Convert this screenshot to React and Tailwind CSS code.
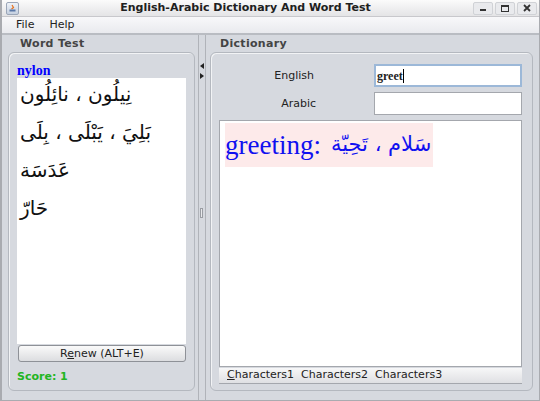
import React from "react";

const ui = { fontFamily: '"DejaVu Sans", sans-serif' };
const serif = { fontFamily: '"Liberation Serif", "DejaVu Serif", serif' };
const arabic = { fontFamily: '"DejaVu Sans", "Noto Sans", sans-serif' };

function TitleBar() {
  return (
    <div className="h-[17px] flex items-center bg-gradient-to-b from-[#fbfbfb] to-[#e4e4e6] border-b border-[#c8c8cc] relative">
      {/* java cup icon */}
      <div className="ml-[4px] w-[13px] h-[13px] rounded-[2px] border border-[#9ba6b8] bg-gradient-to-b from-[#eef2f8] to-[#c5d0e0] flex items-center justify-center">
        <svg width="9" height="9" viewBox="0 0 9 9">
          <path d="M4 1 L5.5 3.5 L3.5 5" stroke="#e8701a" strokeWidth="1.2" fill="none" />
          <rect x="1.5" y="5.5" width="6" height="2" fill="#5a78a8" />
        </svg>
      </div>
      <div className="absolute left-0 right-[50px] top-0 h-full flex items-center justify-center text-[11px] font-bold text-[#202020] pointer-events-none">
        English-Arabic Dictionary And Word Test
      </div>
      <div className="ml-auto mr-[2px] flex gap-[2px]">
        <div className="w-[20px] h-[13px] rounded-[2px] border border-[#d0d2d6] bg-[#e9eaed] flex items-end justify-center pb-[3px]">
          <div className="w-[6px] h-[2px] bg-[#333]" />
        </div>
        <div className="w-[20px] h-[13px] rounded-[2px] border border-[#d0d2d6] bg-[#e9eaed] flex items-center justify-center">
          <div className="w-[8px] h-[7px] border border-[#333] border-t-2" />
        </div>
        <div className="w-[20px] h-[13px] rounded-[2px] border border-[#d0d2d6] bg-[#e9eaed] flex items-center justify-center">
          <svg width="8" height="8" viewBox="0 0 8 8">
            <path d="M1 1 L7 7 M7 1 L1 7" stroke="#333" strokeWidth="1.8" />
          </svg>
        </div>
      </div>
    </div>
  );
}

function Panel({ children, className }) {
  return (
    <div className={"rounded-[6px] border border-[#b4b8bf] shadow-[inset_1px_1px_0_#f2f3f5] bg-[#d6d9df] " + className}>
      {children}
    </div>
  );
}

export default function App() {
  const words = [
    "نِيلُون ، نائِلُون",
    "بَلِيَ ، يَبْلَى ، بِلَى",
    "عَدَسَة",
    "حَارّ",
  ];

  return (
    <div className="w-[540px] h-[401px] flex flex-col bg-[#d6d9df] border-l-2 border-r border-b border-[#a9abb0] text-[#222]" style={ui}>
      <TitleBar />

      {/* Menu */}
      <div className="h-[18px] flex items-center gap-[15px] pl-[14px] text-[11px] bg-gradient-to-b from-[#f8f8fa] to-[#e9eaee] border-b-2 border-[#b9bcc2]">
        <span>File</span>
        <span>Help</span>
      </div>

      <div className="flex-1 flex min-h-0">
        {/* Word Test */}
        <div className="w-[194px] flex flex-col pl-[6px] pb-[9px]">
          <div className="h-[17px] flex items-end pb-[1px] pl-[12px] text-[11px] leading-[14px] font-bold text-[#444] tracking-[0.3px]">Word Test</div>
          <Panel className="flex-1 flex flex-col px-[8px] pt-[10px]">
            <div className="text-[14px] font-bold text-[#0000ff] leading-[15px]" style={serif}>nylon</div>
            <div className="h-[266px] bg-white pt-[3px] pl-[3px]">
              {words.map((w) => (
                <div key={w} className="h-[38px] text-left text-[20px] leading-[26px] text-[#111]" style={arabic}>
                  <span dir="rtl">{w}</span>
                </div>
              ))}
            </div>
            <button className="mt-[1px] h-[17px] w-[168px] ml-[1px] rounded-[3px] border border-[#8e9197] bg-gradient-to-b from-[#fafafa] to-[#dcdde0] text-[11px] leading-[15px] text-[#222]">
              R<span className="underline">e</span>new (ALT+E)
            </button>
            <div className="mt-[7px] text-[11px] font-bold text-[#22b522]">Score: 1</div>
          </Panel>
        </div>

        {/* Split divider */}
        <div className="w-[13px] flex flex-col items-center relative">
          <div className="absolute left-[3px] top-0 bottom-0 w-px bg-[#b0b3b9]" />
          <div className="absolute left-[10px] top-0 bottom-0 w-px bg-[#b0b3b9]" />
          <div className="mt-[28px] flex flex-col items-center gap-[4px] relative">
            <svg width="4" height="6" viewBox="0 0 4 6"><path d="M4 0 L0 3 L4 6 Z" fill="#222" /></svg>
            <svg width="4" height="6" viewBox="0 0 4 6"><path d="M0 0 L4 3 L0 6 Z" fill="#222" /></svg>
          </div>
          <div className="mt-[129px] w-[3px] h-[10px] border border-[#9a9da3] bg-[#e8e9ec] relative" />
        </div>

        {/* Dictionary */}
        <div className="flex-1 flex flex-col pl-[2px] pr-[6px] pb-[9px]">
          <div className="h-[17px] flex items-end pb-[1px] pl-[10px] text-[11px] leading-[14px] font-bold text-[#444] tracking-[0.3px]">Dictionary</div>
          <Panel className="flex-1 flex flex-col pl-[8px] pr-[10px] pt-[11px]">
            <div className="flex items-center h-[23px]">
              <div className="w-[155px] text-right pr-[60px] text-[11px] pt-[2px]">English</div>
              <div className="ml-auto w-[148px] h-[23px] bg-white border-2 border-[#9cb8d8] flex items-center pl-[1px] text-[12px] font-bold" style={serif}>
                greet<span className="w-px h-[14px] bg-black" />
              </div>
            </div>
            <div className="flex items-center h-[23px] mt-[5px]">
              <div className="w-[155px] text-right pr-[58px] text-[11px] pt-[1px]">Arabic</div>
              <div className="ml-auto w-[148px] h-[23px] bg-white border border-[#a4a7ad]" />
            </div>
            <div className="mt-[5px] h-[247px] bg-white border border-[#a4a7ad] pt-[2px] pl-[5px]">
              <div className="w-[208px] h-[44px] bg-[#fdeaea] flex items-center pl-0 text-[#1010f0] whitespace-nowrap overflow-hidden">
                <span className="text-[27px]" style={serif}>greeting:</span>
                <span dir="rtl" className="text-[21px] ml-[10px]" style={arabic}>سَلام ، تَحِيّة</span>
              </div>
            </div>
            <div className="mt-[1px] h-[16px] flex items-center gap-[7px] pl-[8px] text-[11px] bg-gradient-to-b from-[#f7f7f8] to-[#dfe0e3] border-b border-[#a4a7ad]">
              <span><span className="underline">C</span>haracters1</span>
              <span>Characters2</span>
              <span>Characters3</span>
            </div>
          </Panel>
        </div>
      </div>
    </div>
  );
}
